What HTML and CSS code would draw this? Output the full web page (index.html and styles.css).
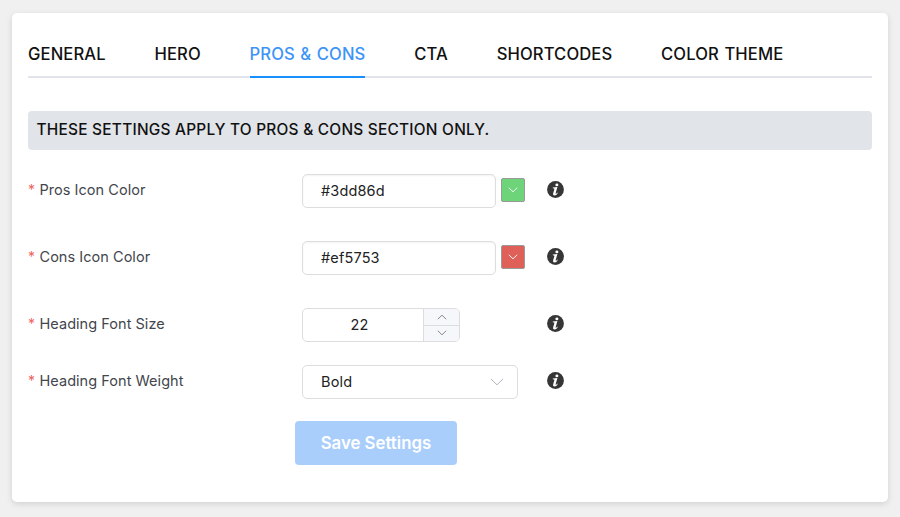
FILE: index.html
```html
<!DOCTYPE html>
<html lang="en">
<head>
<meta charset="utf-8">
<title>Settings</title>
<link rel="stylesheet" href="styles.css">
</head>
<body>
<svg class="defs" width="0" height="0" aria-hidden="true">
  <symbol id="info" viewBox="0 0 17 17">
    <circle cx="8.5" cy="8.5" r="8.4" fill="#363636"/>
    <ellipse cx="9.9" cy="3.9" rx="1.5" ry="1.35" fill="#fff"/>
    <path d="M5.8 6.5 L10.4 6 L8.7 12 Q8.5 13 9.1 12.7 Q9.7 12.3 10.2 11.5 L10.8 11.9 Q9.4 14.4 7.5 14.4 Q5.6 14.3 6.1 12.4 L7.4 8 Q7.6 7.2 5.8 7.2 Z" fill="#fff"/>
  </symbol>
</svg>
<main class="panel">
  <nav class="tabs">
    <a class="tab">GENERAL</a>
    <a class="tab">HERO</a>
    <a class="tab active">PROS &amp; CONS</a>
    <a class="tab">CTA</a>
    <a class="tab">SHORTCODES</a>
    <a class="tab">COLOR THEME</a>
  </nav>
  <h2 class="notice">THESE SETTINGS APPLY TO PROS &amp; CONS SECTION ONLY.</h2>
  <form class="form">
    <div class="row">
      <label class="label"><span class="req">*</span>Pros Icon Color</label>
      <div class="control">
        <div class="field color">#3dd86d</div>
        <div class="swatch green"><svg viewBox="0 0 10 6"><path d="M.8 .8 5 4.8 9.2 .8"/></svg></div>
      </div>
      <svg class="info"><use href="#info"/></svg>
    </div>
    <div class="row">
      <label class="label"><span class="req">*</span>Cons Icon Color</label>
      <div class="control">
        <div class="field color">#ef5753</div>
        <div class="swatch red"><svg viewBox="0 0 10 6"><path d="M.8 .8 5 4.8 9.2 .8"/></svg></div>
      </div>
      <svg class="info"><use href="#info"/></svg>
    </div>
    <div class="row">
      <label class="label"><span class="req">*</span>Heading Font Size</label>
      <div class="control">
        <div class="field number">
          <span class="value">22</span>
          <span class="steps">
            <span class="step"><svg viewBox="0 0 10 6"><path d="M.8 5.2 5 1.2 9.2 5.2"/></svg></span>
            <span class="step"><svg viewBox="0 0 10 6"><path d="M.8 .8 5 4.8 9.2 .8"/></svg></span>
          </span>
        </div>
      </div>
      <svg class="info"><use href="#info"/></svg>
    </div>
    <div class="row short">
      <label class="label"><span class="req">*</span>Heading Font Weight</label>
      <div class="control">
        <div class="field select">Bold<svg viewBox="0 0 14 8"><path d="M1 1 7 6.8 13 1"/></svg></div>
      </div>
      <svg class="info"><use href="#info"/></svg>
    </div>
    <button class="save" type="button">Save Settings</button>
  </form>
</main>
</body>
</html>
```
FILE: styles.css
```css
* { box-sizing: border-box; }
body {
  margin: 0;
  height: 517px;
  padding: 13px 12px 15px;
  background: #f0f0f0;
  font-family: Inter, "Liberation Sans", sans-serif;
  color: #111;
  overflow: hidden;
}
.defs { position: absolute; }
.panel {
  height: 489px;
  padding: 16px;
  background: #fff;
  border-radius: 5px;
  box-shadow: 0 2px 6px rgba(0, 0, 0, .13);
}
.tabs {
  display: flex;
  gap: 48.8px;
  height: 49px;
  box-shadow: inset 0 -2px #e1e4ea;
}
.tab {
  height: 49px;
  line-height: 50px;
  font-size: 16.6px;
  font-weight: 450;
  letter-spacing: .11px;
  word-spacing: 1px;
  color: #111;
  white-space: nowrap;
}
.tab.active { color: #3d94f6; box-shadow: inset 0 -2px #1890ff; }
.notice {
  margin: 33px 0 0;
  height: 39px;
  padding-left: 8.5px;
  line-height: 37px;
  border-radius: 4px;
  background: #e1e4e9;
  font-size: 15.4px;
  font-weight: 550;
  letter-spacing: .25px;
}
.form { padding-top: 24px; }
.row {
  display: grid;
  grid-template-columns: 274px 245px 17px;
  align-items: start;
  height: 67px;
}
.row:nth-child(3) { height: 57px; }
.row.short { height: 56px; }
.label {
  display: flex;
  line-height: 31px;
  font-size: 14.5px;
  letter-spacing: .04px;
  color: #43464d;
}
.req { width: 11.5px; color: #ee6262; font-size: 14px; }
.control { display: flex; align-items: flex-start; gap: 5px; }
.field {
  height: 34px;
  padding-left: 18px;
  border: 1.5px solid #dcdddf;
  border-radius: 5px;
  background: #fff;
  line-height: 31px;
  font-size: 14.5px;
  letter-spacing: .15px;
  color: #222;
}
.color { width: 194px; box-shadow: inset 0 1px 2px rgba(0, 0, 0, .05); }
.swatch {
  display: grid;
  place-items: center;
  width: 24px;
  height: 24px;
  margin-top: 4px;
  border: 1px solid #999;
  border-radius: 2px;
}
.swatch svg, .step svg { width: 10px; height: 6px; }
.field svg, .swatch svg { fill: none; stroke-width: 1; }
.swatch svg { stroke: #f3f8f3; }
.green { background: #6dd479; }
.red { background: #de6058; }
.number { display: flex; width: 158px; padding: 0; overflow: hidden; }
.value { flex: 1; padding-right: 7px; text-align: center; }
.steps { display: flex; flex-direction: column; width: 36px; border-left: 1px solid #dcdddf; background: #f5f7fa; }
.step { flex: 1; display: grid; place-items: center; }
.step + .step { border-top: 1px solid #dcdddf; }
.step svg { stroke: #858992; }
.select { display: flex; align-items: center; justify-content: space-between; width: 216px; padding-right: 13px; line-height: 30px; }
.select svg { width: 14px; height: 8px; stroke: #b0b5bf; }
.info { width: 17px; height: 17px; margin-top: 7px; }
.save {
  display: block;
  width: 162px;
  height: 44px;
  margin-left: 267.4px;
  padding: 0 1px 0 0;
  border: 0;
  border-radius: 4px;
  background: #aacefb;
  color: #fff;
  font: 600 16.8px Inter, sans-serif;
}
```
